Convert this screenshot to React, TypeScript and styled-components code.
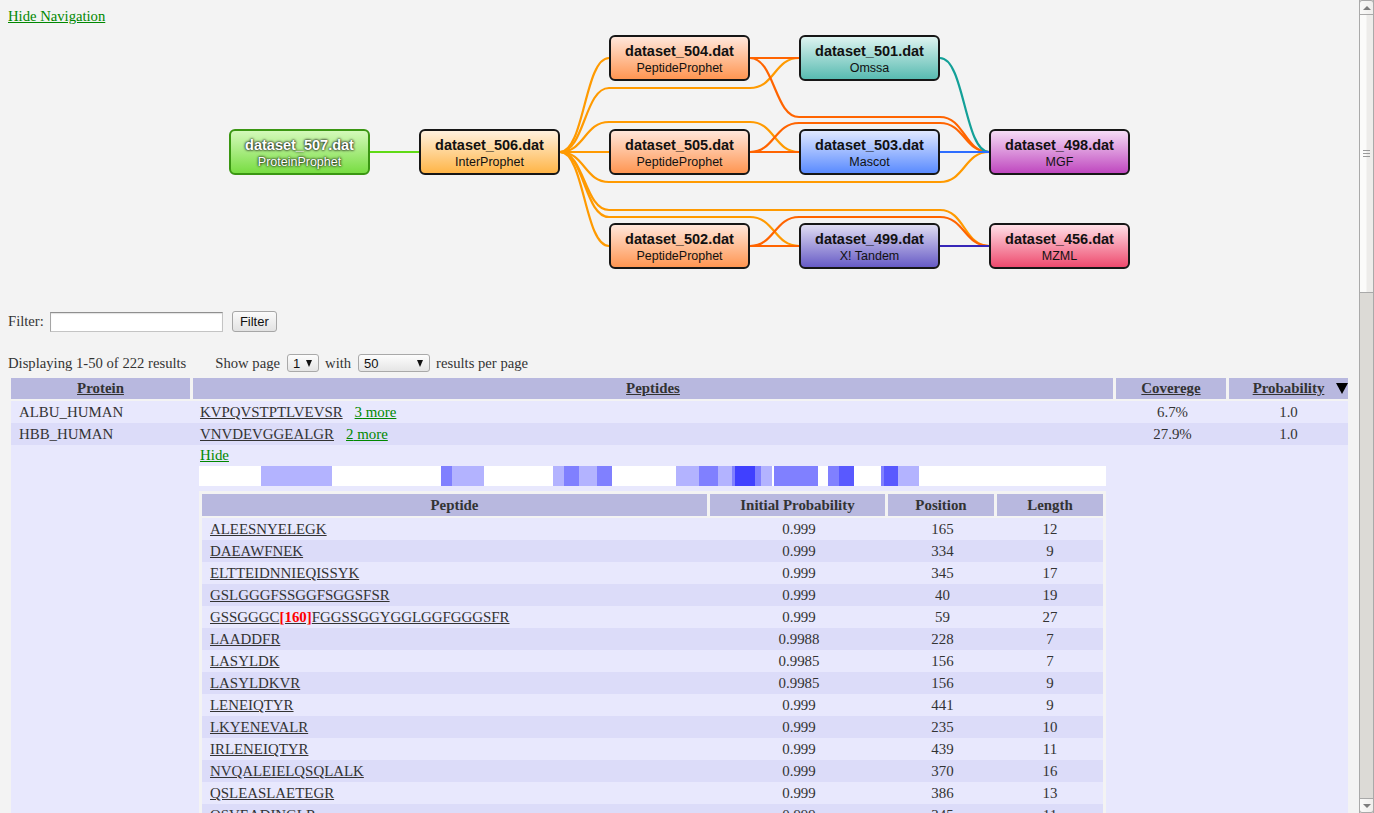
import React from "react";
import styled, { createGlobalStyle } from "styled-components";

const PAGE_BG = "#f3f3f3";
const HEAD_BG = "#b8b8df";
const ROW_LIGHT = "#e8e8fd";
const ROW_DARK = "#dcdcf9";
const TEXT = "#333";
const LINK_GREEN = "#008800";

const GlobalStyle = createGlobalStyle`
  html { background: ${PAGE_BG}; }
  body {
    margin: 8px;
    background: ${PAGE_BG};
    font-family: "Liberation Serif", "Times New Roman", serif;
    font-size: 14.67px;
    color: ${TEXT};
  }
`;

/* ---------- window scrollbar (drawn, since the page is photographed without one) ---------- */

const ScrollRail = styled.div`
  position: fixed;
  top: 0;
  right: 0;
  width: 15px;
  height: 100vh;
  box-sizing: border-box;
  display: flex;
  flex-direction: column;
  background: #dcdad6;
  border-left: 1px solid #a9a9a9;
  border-right: 1px solid #a9a9a9;
  z-index: 10;
`;

const ScrollButton = styled.div<{ $down?: boolean }>`
  height: 15px;
  flex: none;
  box-sizing: border-box;
  margin: 0 -1px;
  border: 1px solid #a9a9a9;
  border-radius: ${(p) => (p.$down ? "0 0 3px 3px" : "3px 3px 0 0")};
  background: linear-gradient(to right, #fafaf9, #efeeec);
  display: flex;
  align-items: center;
  justify-content: center;
  margin-top: ${(p) => (p.$down ? "auto" : "0")};
`;

const ScrollArrow = styled.span<{ $down?: boolean }>`
  width: 0;
  height: 0;
  border-left: 4px solid transparent;
  border-right: 4px solid transparent;
  border-bottom: ${(p) => (p.$down ? "0" : "4px solid #7d7d7d")};
  border-top: ${(p) => (p.$down ? "4px solid #7d7d7d" : "0")};
`;

const ScrollThumb = styled.div`
  height: 278px;
  flex: none;
  box-sizing: border-box;
  margin: 0 -1px;
  border: 1px solid #a9a9a9;
  border-top: 0;
  background: linear-gradient(to right, #fbfbfa 0 45%, #edecea 55% 100%);
  display: flex;
  flex-direction: column;
  align-items: center;
  justify-content: center;
  gap: 2px;
`;

const Grip = styled.span`
  width: 7px;
  height: 1px;
  background: #9a9a9a;
`;

function WindowScrollbar() {
  return (
    <ScrollRail aria-hidden>
      <ScrollButton>
        <ScrollArrow />
      </ScrollButton>
      <ScrollThumb>
        <Grip />
        <Grip />
        <Grip />
      </ScrollThumb>
      <ScrollButton $down>
        <ScrollArrow $down />
      </ScrollButton>
    </ScrollRail>
  );
}

/* ---------- navigation graph ---------- */

const NavLine = styled.div`
  height: 17px;
  line-height: 17px;
`;

const GreenLink = styled.a`
  color: ${LINK_GREEN};
  text-decoration: underline;
  cursor: pointer;
`;

const GraphCanvas = styled.div`
  position: relative;
  height: 285px;
`;

const EdgeLayer = styled.svg`
  position: absolute;
  left: 0;
  top: 0;
  overflow: visible;
`;

const NodeBox = styled.div<{
  $x: number;
  $y: number;
  $top: string;
  $bottom: string;
  $border: string;
  $inverse?: boolean;
}>`
  position: absolute;
  left: ${(p) => p.$x}px;
  top: ${(p) => p.$y}px;
  width: 141px;
  height: 46px;
  box-sizing: border-box;
  border: 2px solid ${(p) => p.$border};
  border-radius: 6px;
  background: linear-gradient(${(p) => p.$top}, ${(p) => p.$bottom});
  display: flex;
  flex-direction: column;
  align-items: center;
  padding-top: 5px;
  font-family: "Liberation Sans", Arial, sans-serif;
  color: ${(p) => (p.$inverse ? "#fff" : "#111")};
  text-shadow: ${(p) =>
    p.$inverse ? "0 0 3px rgba(0,0,0,0.95), 0 0 2px rgba(0,0,0,0.8)" : "none"};
`;

const NodeTitle = styled.div`
  font-size: 14.5px;
  font-weight: bold;
  line-height: 18px;
  white-space: nowrap;
`;

const NodeSub = styled.div`
  font-size: 12.5px;
  line-height: 17px;
  white-space: nowrap;
`;

type GNode = {
  id: string;
  label: string;
  c: number;
  r: number;
  top: string;
  bottom: string;
  border?: string;
  inverse?: boolean;
};

const NODES: GNode[] = [
  { id: "507", label: "ProteinProphet", c: 0, r: 1, top: "#d4f9ba", bottom: "#78dd42", border: "#3a9612", inverse: true },
  { id: "506", label: "InterProphet", c: 1, r: 1, top: "#fff1de", bottom: "#ffb547" },
  { id: "504", label: "PeptideProphet", c: 2, r: 0, top: "#ffe6da", bottom: "#ff9652" },
  { id: "505", label: "PeptideProphet", c: 2, r: 1, top: "#ffe6da", bottom: "#ff9652" },
  { id: "502", label: "PeptideProphet", c: 2, r: 2, top: "#ffe6da", bottom: "#ff9652" },
  { id: "501", label: "Omssa", c: 3, r: 0, top: "#ddf3f0", bottom: "#58bbb1" },
  { id: "503", label: "Mascot", c: 3, r: 1, top: "#e0e8ff", bottom: "#5a8bff" },
  { id: "499", label: "X! Tandem", c: 3, r: 2, top: "#dfdcf2", bottom: "#675bc6" },
  { id: "498", label: "MGF", c: 4, r: 1, top: "#f6dcf6", bottom: "#bf48bf" },
  { id: "456", label: "MZML", c: 4, r: 2, top: "#ffdfe6", bottom: "#ee4a6e" },
];

const NW = 141;
const colX = (c: number) => 221 + 190 * c;
const rowY = (r: number) => 10 + 94 * r;
const midY = (r: number) => rowY(r) + 23;

const GREEN = "#5fda14";
const ORANGE = "#ff9a00";
const RED = "#ff6400";
const TEAL = "#13a098";
const BLUE = "#2d6dff";
const PURPLE = "#3626b8";

type Edge = { color: string; from: [number, number]; via: number[]; to: [number, number] };

const EDGES: Edge[] = [
  { color: GREEN, from: [0, 1], via: [], to: [1, 1] },
  { color: ORANGE, from: [1, 1], via: [], to: [2, 0] },
  { color: ORANGE, from: [1, 1], via: [], to: [2, 1] },
  { color: ORANGE, from: [1, 1], via: [], to: [2, 2] },
  { color: ORANGE, from: [1, 1], via: [63], to: [3, 0] },
  { color: ORANGE, from: [1, 1], via: [97], to: [3, 1] },
  { color: ORANGE, from: [1, 1], via: [192], to: [3, 2] },
  { color: ORANGE, from: [1, 1], via: [157, 157], to: [4, 1] },
  { color: ORANGE, from: [1, 1], via: [185, 185], to: [4, 2] },
  { color: RED, from: [2, 0], via: [], to: [3, 0] },
  { color: RED, from: [2, 0], via: [92], to: [4, 1] },
  { color: RED, from: [2, 1], via: [], to: [3, 1] },
  { color: RED, from: [2, 1], via: [98], to: [4, 1] },
  { color: RED, from: [2, 2], via: [], to: [3, 2] },
  { color: RED, from: [2, 2], via: [192], to: [4, 2] },
  { color: TEAL, from: [3, 0], via: [], to: [4, 1] },
  { color: BLUE, from: [3, 1], via: [], to: [4, 1] },
  { color: PURPLE, from: [3, 2], via: [], to: [4, 2] },
];

function edgePath(e: Edge): string {
  let x = colX(e.from[0]) + NW;
  let y = midY(e.from[1]);
  let d = `M${x} ${y}`;
  let c = e.from[0] + 1;
  const bend = (nx: number, ny: number) => {
    const mx = (x + nx) / 2;
    d += ` C${mx} ${y} ${mx} ${ny} ${nx} ${ny}`;
    x = nx;
    y = ny;
  };
  for (const vy of e.via) {
    bend(colX(c), vy);
    d += ` L${colX(c) + NW} ${vy}`;
    x = colX(c) + NW;
    c++;
  }
  bend(colX(e.to[0]), midY(e.to[1]));
  return d;
}

function NavigationGraph() {
  return (
    <GraphCanvas>
      <EdgeLayer width={1343} height={285}>
        {EDGES.map((e, i) => (
          <path key={i} d={edgePath(e)} fill="none" stroke={e.color} strokeWidth={2.2} />
        ))}
      </EdgeLayer>
      {NODES.map((n) => (
        <NodeBox
          key={n.id}
          $x={colX(n.c)}
          $y={rowY(n.r)}
          $top={n.top}
          $bottom={n.bottom}
          $border={n.border ?? "#161616"}
          $inverse={n.inverse}
        >
          <NodeTitle>dataset_{n.id}.dat</NodeTitle>
          <NodeSub>{n.label}</NodeSub>
        </NodeBox>
      ))}
    </GraphCanvas>
  );
}

/* ---------- filter & pager ---------- */

const FilterBar = styled.div`
  display: flex;
  align-items: center;
  height: 23px;
`;

const FilterInput = styled.input`
  width: 173px;
  height: 20px;
  box-sizing: border-box;
  margin: 0 9px 0 6px;
  background: #fff;
  border: 1px solid #c4c4c4;
  border-top-color: #8f8f8f;
  border-left-color: #a5a5a5;
  box-shadow: inset 0 1px 1px rgba(0, 0, 0, 0.12);
  padding: 0 3px;
`;

const GreyButton = styled.button`
  height: 21px;
  width: 45px;
  box-sizing: border-box;
  padding: 0;
  font-family: "Liberation Sans", Arial, sans-serif;
  font-size: 13px;
  color: #111;
  background: linear-gradient(#fbfbfb, #e2e2e2);
  border: 1px solid #a6a6a6;
  border-radius: 3px;
`;

const PagerBar = styled.div`
  display: flex;
  align-items: center;
  height: 22px;
  margin-top: 19px;
`;

const PagerText = styled.span<{ $gap?: number }>`
  margin-left: ${(p) => p.$gap ?? 0}px;
  white-space: nowrap;
`;

const SelectBox = styled.div<{ $w: number }>`
  width: ${(p) => p.$w}px;
  height: 18px;
  box-sizing: border-box;
  margin: 0 6px 0 7px;
  padding: 0 6px 0 5px;
  display: flex;
  align-items: center;
  justify-content: space-between;
  border: 1px solid #a9a9a9;
  border-radius: 3px;
  background: linear-gradient(#fdfdfd, #e5e5e5);
  font-family: "Liberation Sans", Arial, sans-serif;
  font-size: 13px;
  color: #111;
`;

const Caret = styled.span`
  width: 0;
  height: 0;
  border-left: 3.5px solid transparent;
  border-right: 3.5px solid transparent;
  border-top: 7px solid #111;
`;

/* ---------- results table ---------- */

const ResultsTable = styled.table<{ $w: number }>`
  width: ${(p) => p.$w}px;
  box-sizing: border-box;
  border-collapse: separate;
  border-spacing: 0;
  table-layout: fixed;
  font-size: 14.9px;
  color: ${TEXT};
`;

const OuterTable = styled(ResultsTable)`
  margin: 4px 0 0 3px;
`;

const InnerTable = styled(ResultsTable)`
  margin-top: 5px;
  border: 3px solid ${PAGE_BG};
`;

const Col = styled.col<{ $w: number }>`
  width: ${(p) => p.$w}px;
`;

const HeadCell = styled.th<{ $last?: boolean; $h?: number }>`
  position: relative;
  background: ${HEAD_BG};
  padding: 0;
  line-height: ${(p) => p.$h ?? 21}px;
  border-right: ${(p) => (p.$last ? "0" : `3px solid ${PAGE_BG}`)};
  border-bottom: 2px solid ${PAGE_BG};
  font-weight: bold;
  text-align: center;
  white-space: nowrap;
`;

const HeadLink = styled.a`
  color: ${TEXT};
  text-decoration: underline;
`;

const SortArrow = styled.span`
  position: absolute;
  right: 0;
  top: 5px;
  width: 0;
  height: 0;
  border-left: 6.5px solid transparent;
  border-right: 6.5px solid transparent;
  border-top: 11px solid #000;
`;

const DataRow = styled.tr<{ $alt?: boolean }>`
  & > td {
    background: ${(p) => (p.$alt ? ROW_DARK : ROW_LIGHT)};
    line-height: 22px;
    padding: 0;
    white-space: nowrap;
    vertical-align: top;
  }
`;

const NameCell = styled.td`
  && {
    padding-left: 8px;
  }
`;

const PepCell = styled.td`
  && {
    padding-left: 7px;
  }
`;

const CenterCell = styled.td`
  text-align: center;
`;

const DetailCell = styled.td`
  && {
    padding: 0 7px 0 6px;
  }
`;

const PepLink = styled.a`
  color: ${TEXT};
  text-decoration: underline;
`;

const MoreLink = styled(GreenLink)`
  margin-left: 12px;
`;

const HideLine = styled.div`
  line-height: 21px;
  padding-left: 1px;
`;

const ModMark = styled.span`
  color: #ff0000;
  font-weight: bold;
`;

const CoverageSvg = styled.svg`
  display: block;
  background: #fff;
`;

const L = "#b3b3ff";
const M = "#8080ff";
const D = "#5959ff";
const X = "#4040ff";

const COVERAGE: [number, number, string][] = [
  [261, 291, L], [291, 332, L], [441, 452, M], [452, 474, L], [474, 484, L],
  [553, 564, L], [564, 579, M], [579, 597, L], [597, 612, M],
  [676, 699, L], [699, 718, M], [718, 732, L], [732, 735, M], [735, 755, X],
  [755, 761, M], [761, 772, L], [774, 798, M], [798, 818, M],
  [828, 839, M], [839, 854, D], [881, 884, M], [884, 898, D], [898, 919, L],
];

function CoverageBar() {
  return (
    <CoverageSvg width={907} height={20} shapeRendering="crispEdges">
      {COVERAGE.map(([a, b, c], i) => (
        <rect key={i} x={a - 199} y={0} width={b - a} height={20} fill={c} />
      ))}
    </CoverageSvg>
  );
}

type Pep = [string, string, number, number];

const PEPTIDES: Pep[] = [
  ["ALEESNYELEGK", "0.999", 165, 12],
  ["DAEAWFNEK", "0.999", 334, 9],
  ["ELTTEIDNNIEQISSYK", "0.999", 345, 17],
  ["GSLGGGFSSGGFSGGSFSR", "0.999", 40, 19],
  ["GSSGGGC[160]FGGSSGGYGGLGGFGGGSFR", "0.999", 59, 27],
  ["LAADDFR", "0.9988", 228, 7],
  ["LASYLDK", "0.9985", 156, 7],
  ["LASYLDKVR", "0.9985", 156, 9],
  ["LENEIQTYR", "0.999", 441, 9],
  ["LKYENEVALR", "0.999", 235, 10],
  ["IRLENEIQTYR", "0.999", 439, 11],
  ["NVQALEIELQSQLALK", "0.999", 370, 16],
  ["QSLEASLAETEGR", "0.999", 386, 13],
  ["QSVEADINGLR", "0.999", 345, 11],
  ["SGGGFSSGSAGIINYQR", "0.999", 566, 17],
  ["SLNNQFASFIDK", "0.999", 187, 12],
  ["THNLEPYFESFINNLR", "0.999", 201, 16],
  ["TLLEGEESR", "0.999", 478, 9],
  ["TNAENEFVTIK", "0.998", 268, 11],
  ["VDLLNQEIEFLK", "0.998", 216, 12],
  ["WELLQQVDTSTR", "0.998", 414, 12],
  ["YEELQITAGR", "0.998", 426, 10],
  ["AEAESLYQSK", "0.997", 297, 10],
  ["DVDGAYMTK", "0.997", 321, 9],
  ["FLEQQNQVLQTK", "0.996", 243, 12],
  ["NKYEDEINK", "0.995", 310, 9],
  ["QISNLQQSISDAEQR", "0.994", 455, 15],
  ["SKAEAESLYQSK", "0.993", 295, 12],
  ["YENEVALR", "0.991", 237, 8],
  ["VTMQNLNDR", "0.990", 202, 9],
];

function PeptideText({ seq }: { seq: string }) {
  const m = seq.match(/^(.*?)(\[\d+\])(.*)$/);
  if (!m) return <PepLink>{seq}</PepLink>;
  return (
    <PepLink>
      {m[1]}
      <ModMark>{m[2]}</ModMark>
      {m[3]}
    </PepLink>
  );
}

function PeptideTable() {
  return (
    <InnerTable $w={907}>
      <colgroup>
        <Col $w={508} />
        <Col $w={178} />
        <Col $w={109} />
        <Col $w={106} />
      </colgroup>
      <thead>
        <tr>
          <HeadCell $h={22}>Peptide</HeadCell>
          <HeadCell $h={22}>Initial Probability</HeadCell>
          <HeadCell $h={22}>Position</HeadCell>
          <HeadCell $h={22} $last>
            Length
          </HeadCell>
        </tr>
      </thead>
      <tbody>
        {PEPTIDES.map(([seq, prob, pos, len], i) => (
          <DataRow key={seq} $alt={i % 2 === 1}>
            <NameCell>
              <PeptideText seq={seq} />
            </NameCell>
            <CenterCell>{prob}</CenterCell>
            <CenterCell>{pos}</CenterCell>
            <CenterCell>{len}</CenterCell>
          </DataRow>
        ))}
      </tbody>
    </InnerTable>
  );
}

const MORE_PROTEINS = `KRT1_HUMAN SLNNQFASFIDK 11 19.3% 1.0
KRT10_HUMAN LENEIQTYR 7 15.2% 1.0
TRFE_HUMAN DGAGDVAFVK 5 9.6% 1.0
APOA1_HUMAN DLATVYVDVLK 4 14.2% 1.0
HBA_HUMAN VGAHAGEYGAEALER 3 33.8% 1.0
CO3_HUMAN TGLQEVEVK 6 4.3% 1.0
A1AT_HUMAN LSITGTYDLK 3 8.9% 1.0
HPT_HUMAN VGYVSGWGR 2 6.7% 1.0
IGKC_HUMAN DSTYSLSSTLTLSK 1 24.5% 1.0
FIBB_HUMAN QGFGNVATNTDGK 2 5.2% 1.0
FIBA_HUMAN GSESGIFTNTK 2 3.6% 1.0
APOB_HUMAN TEVIPPLIENR 3 0.9% 1.0
CERU_HUMAN IYHSHIDAPK 1 2.4% 1.0
A2MG_HUMAN AIGYLNTGYQR 2 2.1% 1.0
KRT2_HUMAN NLDLDSIIAEVK 3 6.3% 1.0
KRT9_HUMAN TLLDIDNTR 2 5.9% 1.0
ANT3_HUMAN DDLYVSDAFHK 1 4.7% 1.0
VTDB_HUMAN THLPEVFLSK 1 3.4% 1.0
HEMO_HUMAN NFPSPVDAAFR 1 2.8% 1.0
APOA4_HUMAN LEPYADQLR 1 3.0% 1.0
ZA2G_HUMAN AYLEEECPATLR 1 4.2% 1.0
AMBP_HUMAN ETLLQDFR 0 4.0% 1.0
KNG1_HUMAN YFIDFVAR 0 1.3% 1.0
CLUS_HUMAN ELDESLQVAER 1 4.3% 1.0
APOE_HUMAN LGPLVEQGR 1 5.6% 1.0
GELS_HUMAN TGAQELLR 1 2.1% 1.0
PLMN_HUMAN LSSPAVITDK 1 1.7% 1.0
AACT_HUMAN EIGELYLPK 1 2.6% 1.0
A1AG1_HUMAN WFYIASAFR 0 4.5% 1.0
APOC3_HUMAN DALSSVQESQVAQQAR 0 20.2% 1.0
CFAH_HUMAN SPDVINGSPISQK 0 1.1% 1.0
ITIH4_HUMAN ILDDLSPR 0 0.9% 1.0
C4BPA_HUMAN LSLEIEQLELQR 0 2.0% 0.99
VTNC_HUMAN FEDGVLDPDYPR 0 2.5% 0.99
HRG_HUMAN DSPVLIDFFEDTER 0 2.6% 0.99
ALBU_BOVIN LVNELTEFAK 1 2.9% 0.99
TTHY_HUMAN TSESGELHGLTTEEEFVEGIYK 0 17.7% 0.99
IGHG1_HUMAN GPSVFPLAPSSK 1 6.1% 0.99
IGHA1_HUMAN TPLTATLSK 0 2.5% 0.99
CO4A_HUMAN VGDTLNLNLR 0 0.6% 0.99
FETUA_HUMAN AHYDLR 0 1.6% 0.98
AFAM_HUMAN DADPDTFFAK 0 1.7% 0.98
RET4_HUMAN YWGVASFLQK 0 5.0% 0.98
SAMP_HUMAN VGEYSLYIGR 0 4.6% 0.97
APOH_HUMAN EHSSLAFWK 0 2.6% 0.97
CBG_HUMAN WSAGLTSSQVDLYIPK 0 4.0% 0.96
PON1_HUMAN IFFYDSENPPASEVLR 0 4.2% 0.95
LUM_HUMAN SLEDLQLTHNK 0 3.3% 0.95`
  .split("\n")
  .map((line) => line.split(" "));

function ProteinRow({
  name,
  pep,
  more,
  cov,
  prob,
  alt,
}: {
  name: string;
  pep: string;
  more: number;
  cov: string;
  prob: string;
  alt: boolean;
}) {
  return (
    <DataRow $alt={alt}>
      <NameCell>{name}</NameCell>
      <PepCell>
        <PepLink>{pep}</PepLink>
        {more > 0 && <MoreLink>{more} more</MoreLink>}
      </PepCell>
      <CenterCell>{cov}</CenterCell>
      <CenterCell>{prob}</CenterCell>
    </DataRow>
  );
}

export default function App() {
  return (
    <>
      <GlobalStyle />
      <WindowScrollbar />
      <NavLine>
        <GreenLink>Hide Navigation</GreenLink>
      </NavLine>
      <NavigationGraph />
      <FilterBar>
        <span>Filter:</span>
        <FilterInput type="text" />
        <GreyButton>Filter</GreyButton>
      </FilterBar>
      <PagerBar>
        <PagerText>Displaying 1-50 of 222 results</PagerText>
        <PagerText $gap={29}>Show page</PagerText>
        <SelectBox $w={32}>
          <span>1</span>
          <Caret />
        </SelectBox>
        <PagerText>with</PagerText>
        <SelectBox $w={72}>
          <span>50</span>
          <Caret />
        </SelectBox>
        <PagerText>results per page</PagerText>
      </PagerBar>
      <OuterTable $w={1337}>
        <colgroup>
          <Col $w={182} />
          <Col $w={923} />
          <Col $w={113} />
          <Col $w={119} />
        </colgroup>
        <thead>
          <tr>
            <HeadCell>
              <HeadLink>Protein</HeadLink>
            </HeadCell>
            <HeadCell>
              <HeadLink>Peptides</HeadLink>
            </HeadCell>
            <HeadCell>
              <HeadLink>Coverege</HeadLink>
            </HeadCell>
            <HeadCell $last>
              <HeadLink>Probability</HeadLink>
              <SortArrow />
            </HeadCell>
          </tr>
        </thead>
        <tbody>
          <ProteinRow name="ALBU_HUMAN" pep="KVPQVSTPTLVEVSR" more={3} cov="6.7%" prob="1.0" alt={false} />
          <ProteinRow name="HBB_HUMAN" pep="VNVDEVGGEALGR" more={2} cov="27.9%" prob="1.0" alt />
          <DataRow>
            <td />
            <DetailCell>
              <HideLine>
                <GreenLink>Hide</GreenLink>
              </HideLine>
              <CoverageBar />
              <PeptideTable />
            </DetailCell>
            <td />
            <td />
          </DataRow>
          {MORE_PROTEINS.map(([name, pep, more, cov, prob], i) => (
            <ProteinRow
              key={name}
              name={name}
              pep={pep}
              more={Number(more)}
              cov={cov}
              prob={prob}
              alt={i % 2 === 1}
            />
          ))}
        </tbody>
      </OuterTable>
    </>
  );
}
